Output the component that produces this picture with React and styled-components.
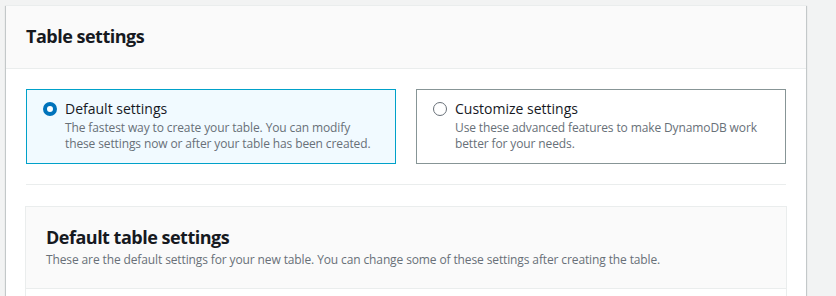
import React, { useState } from 'react';
import styled, { createGlobalStyle } from 'styled-components';

const GlobalStyle = createGlobalStyle`
  body {
    margin: 0;
    background: #f2f3f3;
    font-family: "Open Sans", "Liberation Sans", sans-serif;
    color: #16191f;
  }
`;

const Page = styled('div')`
  padding: 5px 30px 0 6px;
`;

const Container = styled('div')`
  width: 800px;
  background: #fff;
  border-top: 1px solid #eaeded;
  box-shadow: 0 1px 1px 0 rgba(0, 28, 36, 0.3), 1px 1px 1px 0 rgba(0, 28, 36, 0.15),
    -1px 1px 1px 0 rgba(0, 28, 36, 0.15);
`;

const Header = styled('div')`
  background: #fafafa;
  border-bottom: 1px solid #eaeded;
  padding: 19px 20px 21px;
`;

const Title = styled('h2')`
  margin: 0;
  font-size: 18px;
  line-height: 22px;
  font-weight: 700;
  letter-spacing: -0.5px;
`;

const Body = styled('div')`
  padding: 20px;
`;

const Tiles = styled('div')`
  display: grid;
  grid-template-columns: 1fr 1fr;
  gap: 20px;
  padding-bottom: 20px;
  border-bottom: 1px solid #eaeded;
`;

const Tile = styled('label')`
  display: flex;
  gap: 8px;
  padding: 8px 16px 11px;
  border: 1px solid ${({ $selected }) => ($selected ? '#00a1c9' : '#879596')};
  background: ${({ $selected }) => ($selected ? '#f1faff' : '#fff')};
  cursor: pointer;
`;

const Radio = styled('span')`
  flex: none;
  box-sizing: border-box;
  width: 14px;
  height: 14px;
  margin-top: 4px;
  border-radius: 50%;
  background: #fff;
  border: ${({ $checked }) => ($checked ? '4px solid #0073bb' : '1.5px solid #687078')};
`;

const TileTitle = styled('div')`
  font-size: 14px;
  line-height: 22px;
`;

const Description = styled('div')`
  font-size: 12px;
  line-height: 16px;
  color: #687078;
  letter-spacing: -0.12px;
  margin-top: ${({ $spaced }) => ($spaced ? '4px' : '0')};
`;

const Panel = styled('div')`
  margin: 21px -1px 0;
  border: 1px solid #eaeded;
  background: #fff;
`;

const PanelHeader = styled('div')`
  background: #fafafa;
  border-bottom: 1px solid #eaeded;
  padding: 19px 20px 20px;
`;

const PanelBody = styled('div')`
  height: 60px;
`;

const options = [
  {
    id: 'default',
    title: 'Default settings',
    desc: 'The fastest way to create your table. You can modify these settings now or after your table has been created.',
  },
  {
    id: 'custom',
    title: 'Customize settings',
    desc: 'Use these advanced features to make DynamoDB work better for your needs.',
  },
];

export default function App() {
  const [choice, setChoice] = useState('default');

  return (
    <Page>
      <GlobalStyle />
      <Container>
        <Header>
          <Title>Table settings</Title>
        </Header>
        <Body>
          <Tiles>
            {options.map((opt) => (
              <Tile key={opt.id} $selected={choice === opt.id} onClick={() => setChoice(opt.id)}>
                <Radio $checked={choice === opt.id} />
                <div>
                  <TileTitle>{opt.title}</TileTitle>
                  <Description>{opt.desc}</Description>
                </div>
              </Tile>
            ))}
          </Tiles>
          <Panel>
            <PanelHeader>
              <Title>Default table settings</Title>
              <Description $spaced>
                These are the default settings for your new table. You can change some of these settings after
                creating the table.
              </Description>
            </PanelHeader>
            <PanelBody />
          </Panel>
        </Body>
      </Container>
    </Page>
  );
}
